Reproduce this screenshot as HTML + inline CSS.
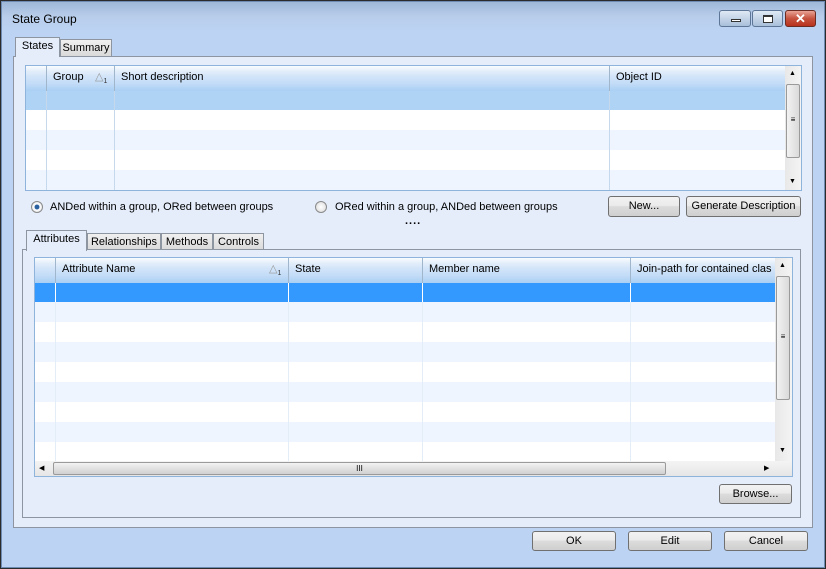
<!DOCTYPE html>
<html><head><style>
*{margin:0;padding:0;box-sizing:border-box}
body{width:826px;height:569px;overflow:hidden;font-family:"Liberation Sans",sans-serif;font-size:11px;color:#000;background:#000}
.a{position:absolute}
.win{left:0;top:0;width:826px;height:569px;background:#bcd3f3;box-shadow:inset 0 0 0 1px #2b2b2b,inset 0 0 0 2px #6e8bb3}
.title{left:2px;top:2px;width:822px;height:29px;background:linear-gradient(#9fb8d8,#b8cdea 50%,#bcd3f3)}
.btn{border:1px solid #707070;border-radius:3px;background:linear-gradient(#f2f2f2 0,#ebebeb 45%,#dcdcdc 50%,#cfcfcf 100%);text-align:center;line-height:18px;font-size:11px}
.panel{border:1px solid #8d96a0;background:#e5edfb}
.grid{border:1px solid #8fb4dc;background:#fff;overflow:hidden}
.hdr{background:linear-gradient(#fafcff 0,#e4eefa 20%,#d3e5f9 40%,#c3dcf7 70%,#a9cff4 100%)}
.col{position:absolute;top:0;bottom:0;border-left:1px solid #c5d8ec}
.hcol{position:absolute;top:0;height:100%;border-left:1px solid #9fb6cc;padding-left:6px;line-height:22px}
.tab{border:1px solid #8d96a0;border-bottom:none;background:linear-gradient(#f0f0f0,#d8d8d8);text-align:center;line-height:16px;font-size:11px}
.tab.on{background:#e5edfb;line-height:17px}
.sb{background:linear-gradient(90deg,#e8e8e8,#f4f4f4)}
.thumb{border:1px solid #9a9a9a;border-radius:2px;background:linear-gradient(90deg,#f2f2f2,#dadada)}
.radio{width:12px;height:12px;border-radius:50%;border:1px solid #8a8a8a;background:radial-gradient(#fff,#d8d8d8)}
</style></head><body>
<div class="a win">
 <div class="a title"></div>
 <div class="a" style="left:12px;top:12px;font-size:12px">State Group</div>
 <div class="a" style="left:719px;top:10px;width:32px;height:17px;border:1px solid #5d7596;border-radius:3px;background:linear-gradient(#dfe9f5,#a9bfda)"><div class="a" style="left:11px;top:8px;width:10px;height:3px;border:1px solid #333;background:#fff"></div></div>
 <div class="a" style="left:752px;top:10px;width:31px;height:17px;border:1px solid #5d7596;border-radius:3px;background:linear-gradient(#dfe9f5,#a9bfda)"><div class="a" style="left:10px;top:4px;width:10px;height:8px;border:1px solid #333;border-top-width:2px;background:#fff"></div></div>
 <div class="a" style="left:785px;top:10px;width:31px;height:17px;border:1px solid #6b2a22;border-radius:3px;background:linear-gradient(#e9a395,#c6533f 50%,#b8321e);color:#fff;text-align:center;font-weight:bold;font-size:13px;line-height:15px">✕</div>

 <div class="a tab on" style="left:15px;top:37px;width:45px;height:20px;z-index:2">States</div>
 <div class="a tab" style="left:60px;top:39px;width:52px;height:18px">Summary</div>
 <div class="a panel" style="left:13px;top:56px;width:800px;height:472px">
  <div class="a grid" style="left:11px;top:8px;width:777px;height:126px">
   <div class="a hdr" style="left:0;top:0;width:759px;height:25px">
    <div class="hcol" style="left:20px;width:68px">Group<span style="position:absolute;left:48px;color:#999">△<sub style="font-size:7px;color:#333">1</sub></span></div>
    <div class="hcol" style="left:88px">Short description</div>
    <div class="hcol" style="left:583px">Object ID</div>
   </div>
   <div class="a" style="left:0;top:25px;width:759px;height:19px;background:#aed3f5"></div>
   <div class="a" style="left:0;top:64px;width:759px;height:20px;background:#eef5fe"></div>
   <div class="a" style="left:0;top:104px;width:759px;height:20px;background:#eef5fe"></div>
   <div class="col" style="left:20px;top:25px"></div><div class="col" style="left:88px;top:25px"></div><div class="col" style="left:583px;top:25px"></div>
   <div class="a sb" style="left:759px;top:0;width:16px;height:124px"><div class="a" style="left:4px;top:4px;font-size:7px">▲</div><div class="a thumb" style="left:1px;top:18px;width:14px;height:74px;text-align:center;font-size:8px;line-height:70px">≡</div><div class="a" style="left:4px;top:112px;font-size:7px">▼</div></div>
  </div>
  <div class="a radio" style="left:17px;top:144px;background:radial-gradient(#2a5fa0 0,#2a5fa0 30%,#fff 40%,#ddd)"></div>
  <div class="a" style="left:36px;top:144px">ANDed within a group, ORed between groups</div>
  <div class="a radio" style="left:301px;top:144px"></div>
  <div class="a" style="left:321px;top:144px">ORed within a group, ANDed between groups</div>
  <div class="a" style="left:391px;top:158px;letter-spacing:1px;font-weight:bold">....</div>
  <div class="a btn" style="left:594px;top:139px;width:72px;height:21px">New...</div>
  <div class="a btn" style="left:672px;top:139px;width:115px;height:21px">Generate Description</div>

  <div class="a tab on" style="left:12px;top:173px;width:61px;height:21px;z-index:2">Attributes</div>
  <div class="a tab" style="left:73px;top:176px;width:74px;height:18px">Relationships</div>
  <div class="a tab" style="left:147px;top:176px;width:52px;height:18px">Methods</div>
  <div class="a tab" style="left:199px;top:176px;width:51px;height:18px">Controls</div>
  <div class="a panel" style="left:8px;top:192px;width:779px;height:269px">
   <div class="a grid" style="left:11px;top:7px;width:759px;height:220px">
    <div class="a hdr" style="left:0;top:0;width:740px;height:25px">
     <div class="hcol" style="left:20px;width:233px">Attribute Name<span style="position:absolute;left:213px;color:#999">△<sub style="font-size:7px;color:#333">1</sub></span></div>
     <div class="hcol" style="left:253px">State</div>
     <div class="hcol" style="left:387px">Member name</div>
     <div class="hcol" style="left:595px;white-space:nowrap">Join-path for contained clas</div>
    </div>
    <div class="a" style="left:0;top:25px;width:740px;height:19px;background:#3399ff"></div>
    <div class="a" style="left:0;top:44px;width:740px;height:20px;background:#eef5fe"></div>
    <div class="a" style="left:0;top:84px;width:740px;height:20px;background:#eef5fe"></div>
    <div class="a" style="left:0;top:124px;width:740px;height:20px;background:#eef5fe"></div>
    <div class="a" style="left:0;top:164px;width:740px;height:20px;background:#eef5fe"></div>
    <div class="col" style="left:20px;top:25px;border-color:#e3edf8"></div><div class="col" style="left:253px;top:25px;border-color:#e3edf8"></div><div class="col" style="left:387px;top:25px;border-color:#e3edf8"></div><div class="col" style="left:595px;top:25px;border-color:#e3edf8"></div>
    <div class="col" style="left:20px;top:25px;height:19px;border-color:#fff"></div><div class="col" style="left:253px;top:25px;height:19px;border-color:#fff"></div><div class="col" style="left:387px;top:25px;height:19px;border-color:#fff"></div><div class="col" style="left:595px;top:25px;height:19px;border-color:#fff"></div>
    <div class="a sb" style="left:740px;top:0;width:17px;height:203px"><div class="a" style="left:4px;top:4px;font-size:7px">▲</div><div class="a thumb" style="left:1px;top:18px;width:14px;height:124px;text-align:center;font-size:8px;line-height:120px">≡</div><div class="a" style="left:4px;top:189px;font-size:7px">▼</div></div>
    <div class="a" style="left:0;top:203px;width:757px;height:15px;background:linear-gradient(#f4f4f4,#e6e6e6)"><div class="a" style="left:4px;top:3px;font-size:7px">◀</div><div class="a" style="left:18px;top:1px;width:613px;height:13px;border:1px solid #9a9a9a;border-radius:2px;background:linear-gradient(#f2f2f2,#d0d0d0);text-align:center;font-size:8px;line-height:11px">III</div><div class="a" style="left:729px;top:3px;font-size:7px">▶</div></div>
   </div>
   <div class="a btn" style="left:696px;top:234px;width:73px;height:20px">Browse...</div>
  </div>
 </div>
 <div class="a btn" style="left:532px;top:531px;width:84px;height:20px">OK</div>
 <div class="a btn" style="left:628px;top:531px;width:84px;height:20px">Edit</div>
 <div class="a btn" style="left:724px;top:531px;width:84px;height:20px">Cancel</div>
</div>
</body></html>
